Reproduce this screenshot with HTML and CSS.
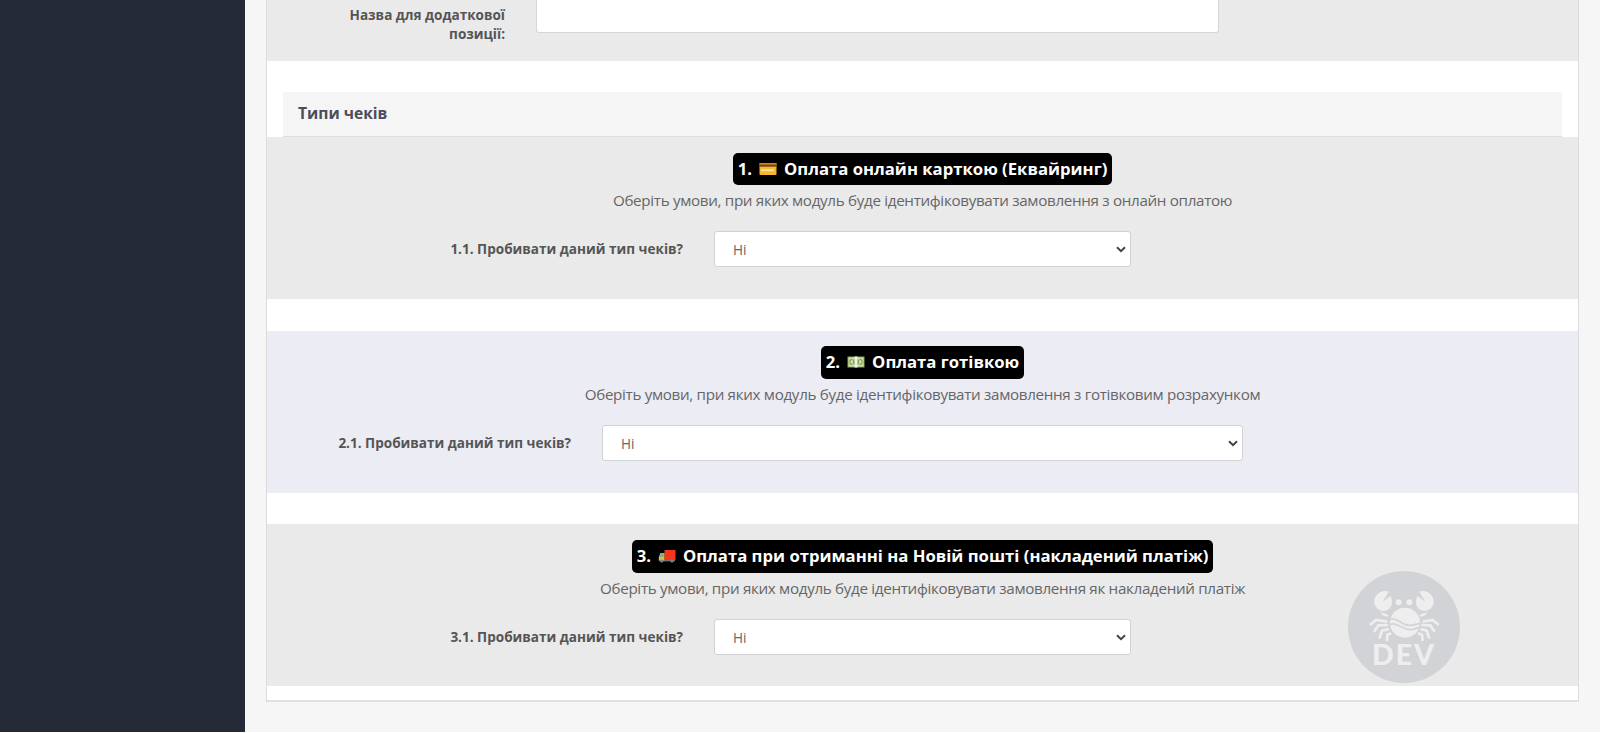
FILE: index.html
```html
<!DOCTYPE html>
<html lang="uk">
<head>
<meta charset="utf-8">
<title>Типи чеків</title>
<link rel="stylesheet" href="styles.css">
</head>
<body>
<div class="shell">
  <aside class="sidebar"></aside>
  <main class="content">
    <div class="panel">
      <section class="extra">
        <label class="extra-label">Назва для додаткової<br>позиції:</label>
        <input class="extra-input" type="text">
      </section>
      <h3 class="heading">Типи чеків</h3>

      <section class="block">
        <h4 class="badge"><span class="t">1.</span>
          <svg class="emoji" viewBox="0 0 18 14"><rect x="0.5" y="1" width="17" height="12" rx="1" fill="#f5b52e"/><rect x="0.5" y="1" width="17" height="1.6" fill="#c9821c"/><rect x="0.5" y="2.6" width="17" height="2" fill="#6b3d14"/><rect x="2" y="7.4" width="13" height="1.8" fill="#fde39a"/></svg>
          <span class="t">Оплата онлайн карткою (Еквайринг)</span></h4>
        <p class="hint">Оберіть умови, при яких модуль буде ідентифіковувати замовлення з онлайн оплатою</p>
        <div class="row">
          <label class="row-label">1.1. Пробивати даний тип чеків?</label>
          <div class="select"><span>Ні</span><svg class="chev" viewBox="0 0 10 7"><path d="M1 1.2 5 5.2 9 1.2"/></svg></div>
        </div>
      </section>

      <section class="block lilac">
        <h4 class="badge tall"><span class="t">2.</span>
          <svg class="emoji" viewBox="0 0 18 14"><rect x="0.5" y="1.5" width="17" height="11" fill="#8ba365"/><rect x="1.5" y="2.5" width="15" height="9" fill="#d3e6a5"/><path d="M5.6 4.6H4.2Q3 4.6 3 6v2q0 1.400 1.200 1.400h1.400M12.400 4.600h1.400Q15 4.600 15 6v2q0 1.400-1.200 1.400h-1.400" fill="none" stroke="#7f9a58" stroke-width="1.200"/><circle cx="9" cy="7" r="3.200" fill="#7f9a58"/><rect x="7.500" y="1.500" width="3" height="11" fill="#f0f0ea"/></svg>
          <span class="t">Оплата готівкою</span></h4>
        <p class="hint">Оберіть умови, при яких модуль буде ідентифіковувати замовлення з готівковим розрахунком</p>
        <div class="row">
          <label class="row-label">2.1. Пробивати даний тип чеків?</label>
          <div class="select wide"><span>Ні</span><svg class="chev" viewBox="0 0 10 7"><path d="M1 1.2 5 5.2 9 1.2"/></svg></div>
        </div>
      </section>

      <section class="block">
        <h4 class="badge tall"><span class="t">3.</span>
          <svg class="emoji" viewBox="0 0 18 14"><path d="M6.500 1h11v10h-11z" fill="#f4371c"/><path d="M0.800 11.500V8L2.500 4H6.500v7.500z" fill="#f0b43a"/><path d="M1.200 8 2.800 4.200h2.800V8z" fill="#6fb596"/><path d="M1 11.200h16v1.100H1z" fill="#8b8f92"/><circle cx="3.800" cy="12" r="1.600" fill="#7d8386"/><circle cx="14" cy="12" r="1.600" fill="#7d8386"/></svg>
          <span class="t">Оплата при отриманні на Новій пошті (накладений платіж)</span></h4>
        <p class="hint">Оберіть умови, при яких модуль буде ідентифіковувати замовлення як накладений платіж</p>
        <div class="row">
          <label class="row-label">3.1. Пробивати даний тип чеків?</label>
          <div class="select"><span>Ні</span><svg class="chev" viewBox="0 0 10 7"><path d="M1 1.2 5 5.2 9 1.2"/></svg></div>
        </div>
      </section>
    </div>
  </main>
</div>
<div class="mark">
  <svg class="crab" viewBox="0 0 336 336">
    <circle cx="168" cy="168" r="168" fill="#d2d3d7"/>
    <g fill="#eeeeef">
      <path d="M122 62C100 54 82 70 79 88C77 106 90 120 106 120C121 120 132 108 132 93C132 86 130 79 127 75L104 93Z"/>
      <path d="M214 62C236 54 254 70 257 88C259 106 246 120 230 120C215 120 204 108 204 93C204 86 206 79 209 75L232 93Z"/>
      <path d="M98 123C106 128 116 127 122 134L118 137C108 137 100 132 98 123Z"/>
      <path d="M238 123C230 128 220 127 214 134L218 137C228 137 236 132 238 123Z"/>
      <circle cx="152" cy="94" r="9"/><circle cx="184" cy="94" r="9"/>
      <circle cx="171" cy="155" r="45"/>
    </g>
    <g fill="none" stroke="#d2d3d7" stroke-width="5">
      <path d="M124 145C150 137 160 164 186 163C200 162 208 157 218 158"/>
      <path d="M124 161C148 151 162 176 186 176C200 176 206 170 216 169"/>
    </g>
    <g fill="none" stroke="#eeeeef" stroke-width="8">
      <path d="M118 152 84 147 66 162"/><path d="M120 162 91 163 78 183"/><path d="M123 174 102 179 94 203"/><path d="M130 187 118 191 117 210"/>
      <path d="M224 152 254 147 272 162"/><path d="M220 162 247 163 260 183"/><path d="M217 174 236 179 244 203"/><path d="M210 187 222 191 224 210"/>
    </g>
  </svg>
  <span class="mark-text">DEV</span>
</div>
</body>
</html>
```
FILE: styles.css
```css
* { box-sizing: border-box; }
body { margin: 0; background: #fff; font-family: "Open Sans", "Noto Sans", sans-serif; color: #666; overflow: hidden; }
.shell { display: flex; height: 732px; background: #f6f6f6; }
.sidebar { width: 245px; background: #252b36; }
.content { flex: 1; padding: 0 21px; }
.panel { height: 702px; border: 1px solid #dcdcdc; border-top: 0; border-bottom: 2px solid #e2e2e2; background: #fff; }
.extra { display: flex; height: 60.5px; background: #eaeaea; }
.extra-label { width: 238px; padding-top: 5.5px; text-align: right; font-size: 13.55px; line-height: 19px; font-weight: 700; color: #555; }
.extra-input { width: 683px; height: 33px; margin-left: 31px; border: 1px solid #d6d6d6; border-top: 0; border-radius: 0 0 3px 3px; background: #fff; }
.heading { margin: 31.5px 16px 0; height: 45px; padding-left: 15px; border-bottom: 1px solid #dedede; border-radius: 3px 3px 0 0; background: #f5f5f5; font-size: 15.6px; line-height: 43px; font-weight: 700; color: #4c4d5a; }
.block { display: flex; flex-direction: column; align-items: center; height: 162px; padding-top: 16px; margin-bottom: 32px; background: #eaeaea; }
.block.lilac { padding-top: 15px; margin-bottom: 31px; background: #ececf5; }
.badge { display: flex; align-items: center; height: 32px; margin: 0; padding: 0 5px 2px; border-radius: 5px; background: #000; color: #fff; font-size: 16.7px; font-weight: 700; white-space: nowrap; }
.badge.tall { height: 33px; }
.emoji { width: 18px; height: 14px; margin: 1px 7px 0; }
.hint { margin: 4px 0 0; font-size: 15.2px; letter-spacing: -0.32px; line-height: 22px; white-space: nowrap; }
.row { display: flex; align-items: center; justify-content: center; width: 100%; margin-top: 20px; }
.row-label { width: 418px; margin-left: -449px; margin-right: 31px; text-align: right; font-size: 13.55px; font-weight: 700; color: #555; }
.select { display: flex; align-items: center; justify-content: space-between; width: 417px; height: 36px; padding: 0 4px 0 18px; border: 1px solid #d2d2d4; border-radius: 3px; background: #fff; font-size: 13.6px; }
.select.wide { width: 641px; }
.chev { width: 10px; height: 7px; fill: none; stroke: #444; stroke-width: 2; }
.mark { position: absolute; left: 1348px; top: 571px; width: 112px; height: 112px; }
.crab { display: block; width: 112px; height: 112px; }
.mark-text { position: absolute; left: 0; right: 0; top: 67px; text-align: center; font: 900 28.5px/32px Lato, sans-serif; letter-spacing: 2px; color: #eeeeef; }
```
